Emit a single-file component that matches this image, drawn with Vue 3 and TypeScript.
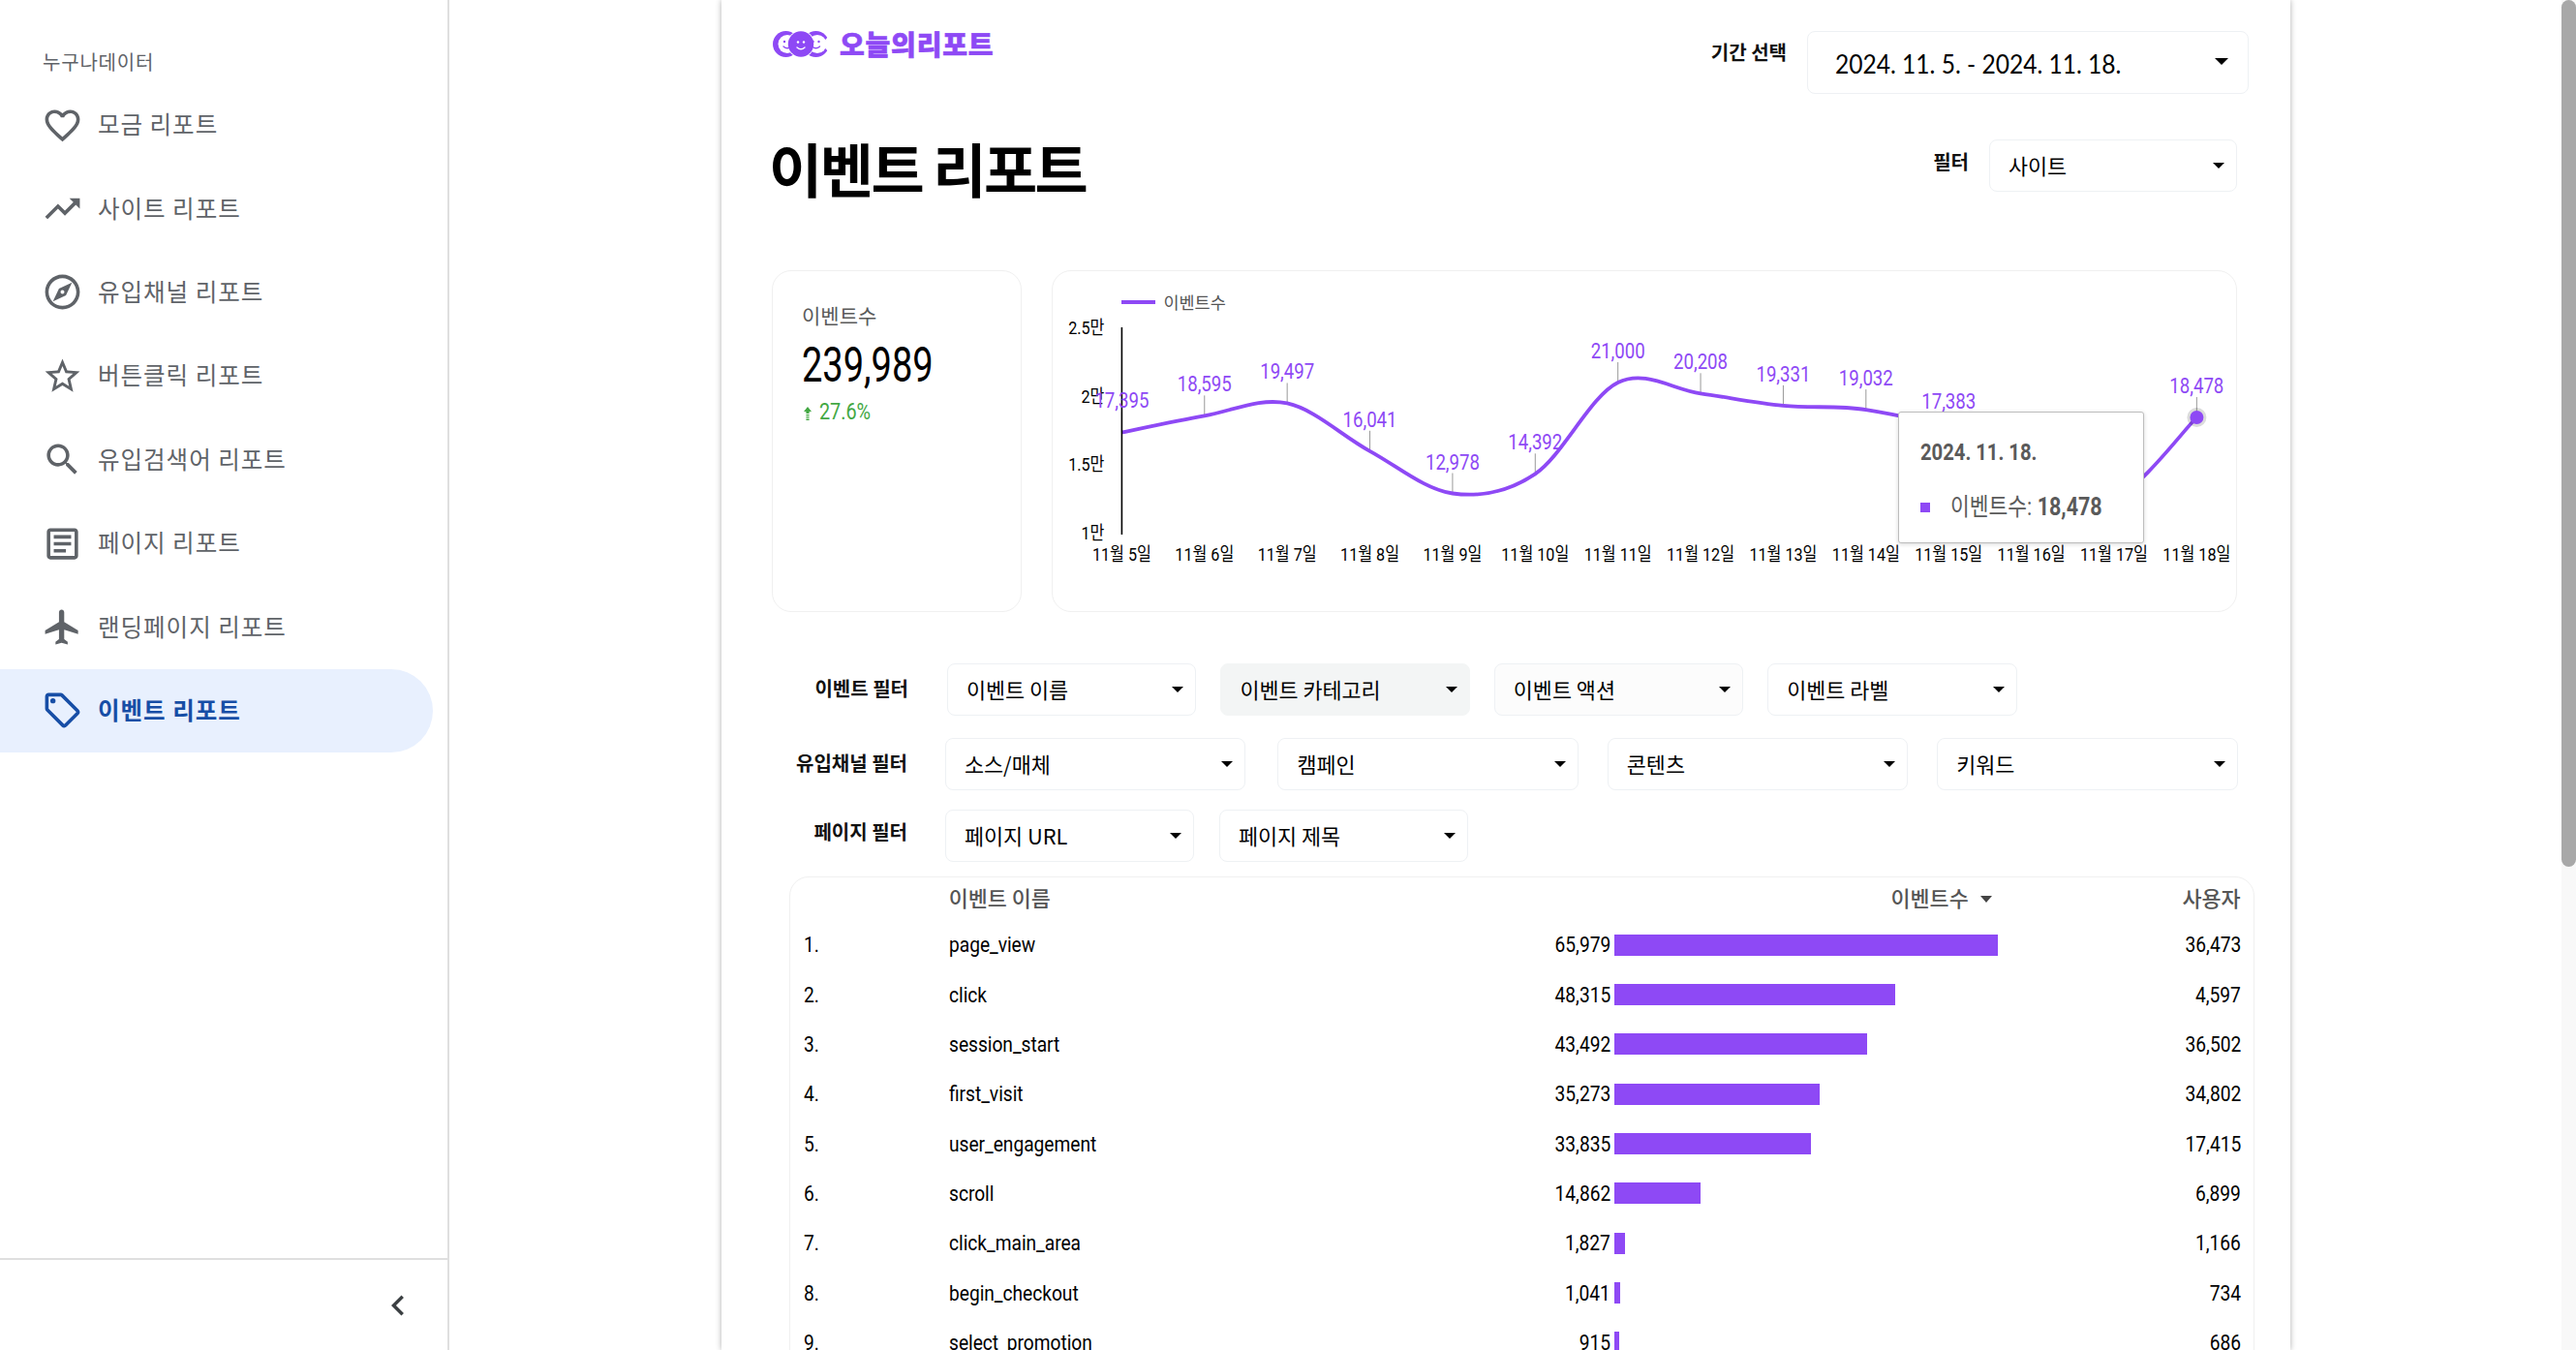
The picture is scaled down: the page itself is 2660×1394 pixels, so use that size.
<script setup lang="ts">
const menu = [
  { label: '모금 리포트', paths: ['M16.5 3c-1.74 0-3.41.81-4.5 2.09C10.91 3.81 9.24 3 7.5 3 4.42 3 2 5.42 2 8.5c0 3.78 3.4 6.86 8.55 11.54L12 21.35l1.45-1.32C18.6 15.36 22 12.28 22 8.5 22 5.42 19.58 3 16.5 3zm-4.4 15.55l-.1.1-.1-.1C7.14 14.24 4 11.39 4 8.5 4 6.5 5.5 5 7.5 5c1.54 0 3.04.99 3.57 2.36h1.87C13.46 5.99 14.96 5 16.5 5c2 0 3.5 1.5 3.5 3.5 0 2.89-3.14 5.74-7.9 10.05z'] },
  { label: '사이트 리포트', paths: ['M16 6l2.29 2.29-4.88 4.88-4-4L2 16.59 3.41 18l6-6 4 4 6.3-6.29L22 12V6z'] },
  { label: '유입채널 리포트', paths: ['M12 2C6.48 2 2 6.48 2 12s4.48 10 10 10 10-4.48 10-10S17.52 2 12 2zm0 18c-4.41 0-8-3.59-8-8s3.59-8 8-8 8 3.59 8 8-3.59 8-8 8zm-5.5-2.5l7.51-3.49L17.5 6.5 9.99 9.99 6.5 17.5zm5.5-6.6c.61 0 1.1.49 1.1 1.1s-.49 1.1-1.1 1.1-1.1-.49-1.1-1.1.49-1.1 1.1-1.1z'] },
  { label: '버튼클릭 리포트', paths: ['M22 9.24l-7.19-.62L12 2 9.19 8.63 2 9.24l5.46 4.73L5.82 21 12 17.27 18.18 21l-1.63-7.03L22 9.24zM12 15.4l-3.76 2.27 1-4.28-3.32-2.88 4.38-.38L12 6.1l1.71 4.04 4.38.38-3.32 2.88 1 4.28L12 15.4z'] },
  { label: '유입검색어 리포트', paths: ['M15.5 14h-.79l-.28-.27C15.41 12.59 16 11.11 16 9.5 16 5.91 13.09 3 9.5 3S3 5.91 3 9.5 5.91 16 9.5 16c1.61 0 3.09-.59 4.23-1.57l.27.28v.79l5 4.99L20.49 19l-4.99-5zm-6 0C7.01 14 5 11.99 5 9.5S7.01 5 9.5 5 14 7.01 14 9.5 11.99 14 9.5 14z'] },
  { label: '페이지 리포트', paths: ['M19 5v14H5V5h14m0-2H5c-1.1 0-2 .9-2 2v14c0 1.1.9 2 2 2h14c1.1 0 2-.9 2-2V5c0-1.1-.9-2-2-2z', 'M14 17H7v-2h7v2zm3-4H7v-2h10v2zm0-4H7V7h10v2z'] },
  { label: '랜딩페이지 리포트', paths: ['M21 16v-2l-8-5V3.5c0-.83-.67-1.5-1.5-1.5S10 2.67 10 3.5V9l-8 5v2l8-2.5V19l-2 1.5V22l3.5-1 3.5 1v-1.5L13 19v-5.5l8 2.5z'] },
  { label: '이벤트 리포트', active: true, paths: ['M21.41 11.58l-9-9C12.05 2.22 11.55 2 11 2H4c-1.1 0-2 .9-2 2v7c0 .55.22 1.05.59 1.42l9 9c.36.36.86.58 1.41.58s1.05-.22 1.41-.59l7-7c.37-.36.59-.86.59-1.41s-.23-1.06-.59-1.42zM13 20.01L4 11V4h7v-.01l9 9-7 7.02z', 'M6.5 5A1.5 1.5 0 1 0 6.5 8 1.5 1.5 0 1 0 6.5 5z'] },
]

const filters = [
  { label: '이벤트 필터', cls: 'row-a', items: ['이벤트 이름', '이벤트 카테고리', '이벤트 액션', '이벤트 라벨'] },
  { label: '유입채널 필터', cls: 'row-b', items: ['소스/매체', '캠페인', '콘텐츠', '키워드'] },
  { label: '페이지 필터', cls: 'row-c', items: ['페이지 URL', '페이지 제목'] },
]

const rows = [
  ['page_view', 65979, 36473], ['click', 48315, 4597], ['session_start', 43492, 36502],
  ['first_visit', 35273, 34802], ['user_engagement', 33835, 17415], ['scroll', 14862, 6899],
  ['click_main_area', 1827, 1166], ['begin_checkout', 1041, 734], ['select_promotion', 915, 686],
] as [string, number, number][]
const fmt = (n: number) => n.toLocaleString('en-US')

const vals = [17395, 18595, 19497, 16041, 12978, 14392, 21000, 20208, 19331, 19032, 17383, 13100, 12559, 18478]
const showLabel = (i: number) => i !== 11 && i !== 12
const px = (i: number) => 1159 + i * 85.38
const py = (v: number) => 552 - (v - 10000) * 0.01427
const pts = vals.map((v, i) => ({ x: px(i), y: py(v), v, i, day: `11월 ${i + 5}일` }))
function curve(): string {
  let d = `M${pts[0].x} ${pts[0].y}`
  for (let i = 0; i < pts.length - 1; i++) {
    const p0 = pts[Math.max(0, i - 1)]
    const p1 = pts[i]
    const p2 = pts[i + 1]
    const p3 = pts[Math.min(pts.length - 1, i + 2)]
    const c1x = p1.x + (p2.x - p0.x) / 6
    const c1y = p1.y + (p2.y - p0.y) / 6
    const c2x = p2.x - (p3.x - p1.x) / 6
    const c2y = p2.y - (p3.y - p1.y) / 6
    d += ` C${c1x} ${c1y} ${c2x} ${c2y} ${p2.x} ${p2.y}`
  }
  return d
}
const linePath = curve()
const squeeze = (x: number, y: number, k = 0.85) => `translate(${x} ${y}) scale(${k} 1)`
const yTicks = [
  { t: '2.5만', y: 345 },
  { t: '2만', y: 416 },
  { t: '1.5만', y: 486 },
  { t: '1만', y: 557 },
]
</script>

<template>
  <div class="root">
    <aside class="side">
      <div class="side-top">
        <div class="brand">누구나데이터</div>
        <nav class="nav">
          <div v-for="m in menu" :key="m.label" class="nav-item" :class="{ active: m.active }">
            <svg class="nav-icon" viewBox="0 0 24 24"><path v-for="p in m.paths" :key="p" :d="p" /></svg>
            <span>{{ m.label }}</span>
          </div>
        </nav>
      </div>
      <div class="side-foot">
        <svg class="chev" viewBox="0 0 24 24"><path d="M15.41 7.41L14 6l-6 6 6 6 1.41-1.41L10.83 12z" /></svg>
      </div>
    </aside>

    <main class="report">
      <div class="head-a">
        <div class="logo">
          <svg class="logo-mark" viewBox="0 0 58 27">
            <circle cx="13.5" cy="13.5" r="13.5" fill="#8e49f5" />
            <circle cx="15" cy="13.5" r="9.5" fill="#fff" />
            <circle cx="44.5" cy="13.5" r="13.5" fill="#8e49f5" />
            <circle cx="46" cy="13.5" r="9.5" fill="#fff" />
            <path d="M50 13.5 L58 5 V22 Z" fill="#fff" />
            <circle cx="29" cy="13.5" r="14" fill="#fff" />
            <circle cx="29" cy="13.5" r="13.2" fill="#8e49f5" />
            <g fill="#8e49f5">
              <circle cx="12" cy="11" r="1.2" /><circle cx="18" cy="11" r="1.2" />
              <circle cx="41.5" cy="11" r="1.2" /><circle cx="47.5" cy="11" r="1.2" />
            </g>
            <g fill="#fff">
              <circle cx="26" cy="11.5" r="1.2" /><circle cx="32" cy="11.5" r="1.2" />
            </g>
            <g fill="none" stroke-width="1.4" stroke-linecap="round">
              <path d="M11 16 Q15 19.5 19 16" stroke="#8e49f5" />
              <path d="M25 17 Q29 20.5 33 17" stroke="#fff" />
              <path d="M40.5 16 Q44.5 19.5 48.5 16" stroke="#8e49f5" />
            </g>
          </svg>
          <span class="logo-text">오늘의리포트</span>
        </div>
        <div class="date-wrap">
          <span class="ctl-label date-label">기간 선택</span>
          <div class="date-box">
            <span class="date-text">2024. 11. 5. - 2024. 11. 18.</span>
            <i class="caret big"></i>
          </div>
        </div>
      </div>

      <div class="head-b">
        <h1 class="title">이벤트 리포트</h1>
        <div class="site-wrap">
          <span class="ctl-label site-label">필터</span>
          <div class="select site-box"><span>사이트</span><i class="caret"></i></div>
        </div>
      </div>

      <section class="cards">
        <div class="card kpi">
          <div class="kpi-name">이벤트수</div>
          <div class="kpi-val"><span class="sq big-num">239,989</span></div>
          <div class="kpi-delta">
            <svg class="up" viewBox="0 0 8 14"><path d="M4 0 L8 5 H5.6 V7 H2.4 V5 H0 Z M2.4 8 H5.6 V9.2 H2.4 Z M2.4 10.2 H5.6 V11.4 H2.4 Z M2.4 12.4 H5.6 V14 H2.4 Z" /></svg>
            <span class="sq">27.6%</span>
          </div>
        </div>
        <div class="card chart">
          <svg class="chart-svg" viewBox="1087.6 279 1222.4 353">
            <rect x="1158.6" y="310" width="35" height="4" fill="#8e49f5" />
            <text class="legend" x="1202" y="319">이벤트수</text>
            <text v-for="t in yTicks" :key="t.t" class="tick" text-anchor="end" :transform="squeeze(1141, t.y)">{{ t.t }}</text>
            <g v-for="p in pts" :key="'s' + p.i">
              <line v-if="showLabel(p.i)" :x1="p.x" :x2="p.x" :y1="p.y - 21" :y2="p.y" stroke="#999" stroke-width="1" />
            </g>
            <path :d="linePath" fill="none" stroke="#8e49f5" stroke-width="3.8" />
            <line x1="1159" x2="1159" y1="338" y2="552" stroke="#000" stroke-width="1.6" />
            <g v-for="p in pts" :key="'l' + p.i">
              <text v-if="showLabel(p.i)" class="val" text-anchor="middle" :transform="squeeze(p.x, p.y - 25, 0.81)">{{ fmt(p.v) }}</text>
              <text class="tick" text-anchor="middle" :transform="squeeze(p.x, 579)">{{ p.day }}</text>
            </g>
            <circle cx="2269" cy="431" r="10" fill="#000" opacity=".14" />
            <circle cx="2269" cy="431" r="7" fill="#8e49f5" />
          </svg>
          <div class="tooltip">
            <div class="tip-title"><span class="sq">2024. 11. 18.</span></div>
            <div class="tip-row">
              <i class="tip-dot"></i>
              <span class="sq">이벤트수: <b>18,478</b></span>
            </div>
          </div>
        </div>
      </section>

      <section class="filters">
        <div v-for="f in filters" :key="f.label" class="frow" :class="f.cls">
          <span class="ctl-label flabel">{{ f.label }}</span>
          <div class="fitems">
            <div v-for="it in f.items" :key="it" class="select" :class="{ hot: it === '이벤트 카테고리', warm: it === '이벤트 액션' }">
              <span>{{ it }}</span><i class="caret"></i>
            </div>
          </div>
        </div>
      </section>

      <section class="table">
        <div class="trow thead">
          <span class="c-idx"></span>
          <span class="c-name"><span>이벤트 이름</span></span>
          <span class="c-bar th-sort"><span>이벤트수</span><i class="sort"></i></span>
          <span class="c-user"><span>사용자</span></span>
        </div>
        <div v-for="(r, i) in rows" :key="r[0]" class="trow">
          <span class="c-idx"><span class="sq">{{ i + 1 }}.</span></span>
          <span class="c-name">
            <span class="sq">{{ r[0] }}</span>
            <span class="num sq-r">{{ fmt(r[1]) }}</span>
          </span>
          <span class="c-bar"><i class="bar" :style="{ width: (397 * r[1] / 65979) + 'px' }"></i></span>
          <span class="c-user"><span class="sq-r">{{ fmt(r[2]) }}</span></span>
        </div>
      </section>
    </main>

    <div class="scroll"><div class="thumb"></div></div>
  </div>
</template>

<style>
html, body { margin: 0; overflow: hidden; background: #fff; }
</style>

<style scoped>
.root {
  position: relative;
  display: flex;
  width: 2660px;
  height: 1394px;
  overflow: hidden;
  background: #fff;
  font-family: "Noto Sans CJK KR", "Noto Sans", sans-serif;
}
.side {
  box-sizing: border-box;
  width: 464px;
  height: 1394px;
  flex: none;
  border-right: 2px solid #dfdfdf;
  display: flex;
  flex-direction: column;
  justify-content: space-between;
}
.brand {
  margin: 49px 0 0 44px;
  height: 30px;
  line-height: 30px;
  font-size: 20px;
  letter-spacing: .8px;
  color: #5f6368;
}
.nav { margin-top: 7px; padding-right: 15px; }
.nav-item {
  display: flex;
  align-items: center;
  height: 86.4px;
  padding-left: 43px;
  color: #5f6368;
  font-size: 24.5px;
  letter-spacing: 1px;
  border-radius: 0 43px 43px 0;
}
.nav-item span { margin-left: 15px; padding-bottom: 3px; }
.nav-icon { width: 43px; height: 43px; flex: none; fill: #5f6368; }
.nav-item.active { background: #e8f0fe; color: #174ea6; font-weight: 700; }
.nav-item.active .nav-icon { fill: #174ea6; }
.side-foot {
  height: 95px;
  border-top: 2px solid #dfdfdf;
  box-sizing: border-box;
  display: flex;
  align-items: center;
  justify-content: flex-end;
  padding-right: 30px;
}
.chev { width: 42px; height: 42px; fill: #3c4043; }

.report {
  box-sizing: border-box;
  flex: none;
  width: 1620px;
  height: 1394px;
  margin-left: 281px;
  padding: 32px 55px 0 53px;
  background: #fff;
  box-shadow: 0 0 6px rgba(0, 0, 0, .32);
  font-family: "Roboto", "Noto Sans CJK KR", sans-serif;
  color: #000;
  overflow: hidden;
}
.sq, .sq-r { display: inline-block; transform: scaleX(.86); transform-origin: left center; white-space: pre; }
.sq-r { transform-origin: right center; }
.head-a { display: flex; justify-content: space-between; height: 65px; margin-right: -12px; }
.logo { display: flex; align-items: flex-start; }
.logo-mark { width: 58px; height: 27px; }
.logo-text {
  margin-left: 11px;
  font-family: "Noto Sans CJK KR", sans-serif;
  font-size: 28px;
  line-height: 27px;
  font-weight: 900;
  letter-spacing: .8px;
  -webkit-text-stroke: .6px #8e49f5;
  color: #8e49f5;
}
.date-wrap { display: flex; align-items: flex-start; }
.ctl-label { font-family: "Noto Sans CJK KR", sans-serif; font-weight: 700; font-size: 20px; line-height: 24px; color: #111; white-space: nowrap; }
.date-label { margin-top: 10px; margin-right: 21px; }
.date-box {
  box-sizing: border-box;
  display: flex;
  align-items: center;
  justify-content: space-between;
  width: 456px;
  height: 65px;
  padding: 2px 20px 0 28px;
  border: 1px solid #eef1f4;
  border-radius: 8px;
}
.date-text { font-family: "Lato", sans-serif; font-size: 27px; line-height: 40px; display: inline-block; transform: scaleX(.91); transform-origin: left center; white-space: pre; }
.caret { width: 0; height: 0; flex: none; border-left: 6.5px solid transparent; border-right: 6.5px solid transparent; border-top: 6.5px solid #000; }
.caret.big { border-left-width: 7px; border-right-width: 7px; border-top-width: 7px; margin-top: -4px; }

.head-b { display: flex; justify-content: space-between; margin-top: 47px; height: 54px; }
.title {
  margin: -1px 0 0 -4px;
  font-family: "Noto Sans CJK KR", sans-serif;
  font-size: 60px;
  line-height: 60px;
  font-weight: 700;
  letter-spacing: -2.5px;
  white-space: nowrap;
}
.site-wrap { display: flex; align-items: flex-start; }
.site-label { margin-top: 11px; margin-right: 21px; }
.select {
  box-sizing: border-box;
  display: flex;
  align-items: center;
  justify-content: space-between;
  height: 54px;
  padding: 0 12px 0 19px;
  border: 1px solid #eef1f4;
  border-radius: 8px;
  font-family: "Noto Sans CJK KR", sans-serif;
  font-size: 21.8px;
  color: #000;
  white-space: nowrap;
}
.select span { padding-bottom: 2px; }
.site-box { width: 256px; }
.select.hot { background: #f3f5f5; border-color: #f3f5f5; }
.select.warm { background: #fcfcfc; }

.cards { display: flex; gap: 31px; height: 353px; margin-top: 81px; margin-left: -1px; }
.card { box-sizing: border-box; background: #fff; border: 1px solid #f0f0f0; border-radius: 20px; }
.kpi { width: 258px; padding: 30px 0 0 30px; }
.kpi-name { font-family: "Noto Sans CJK KR", sans-serif; font-size: 21px; line-height: 30px; color: #5a5a5a; }
.kpi-val { margin-top: 10px; font-size: 50px; line-height: 54px; color: #000; }
.big-num { transform: scaleX(.76); }
.kpi-delta { display: flex; align-items: center; margin-top: 8px; height: 26px; color: #43a843; font-size: 23px; fill: #43a843; }
.up { width: 8px; height: 14px; margin: 4px 8px 0 2px; flex: none; }
.chart { flex: 1; position: relative; }
.chart-svg { position: absolute; left: 0; top: -1px; width: 1222.4px; height: 353px; overflow: visible; font-family: "Roboto", "Noto Sans CJK KR", sans-serif; }
.legend { font-family: "Noto Sans CJK KR", sans-serif; font-size: 17.5px; fill: #555; }
.tick { font-size: 19px; fill: #000; }
.val { font-size: 23px; fill: #8e49f5; }
.tooltip {
  position: absolute;
  box-sizing: border-box;
  left: 873px;
  top: 145px;
  width: 254px;
  height: 136px;
  padding: 27px 0 0 22px;
  background: #fff;
  border: 1px solid #bdbdbd;
  border-radius: 3px;
  box-shadow: 0 1px 4px rgba(0, 0, 0, .16);
  color: #5a5a5a;
  font-size: 25px;
}
.tip-title { font-weight: 700; font-size: 23.5px; line-height: 28px; }
.tip-row { display: flex; align-items: center; margin-top: 29px; line-height: 28px; }
.tip-dot { width: 10px; height: 10px; margin-right: 21px; background: #8e49f5; flex: none; }
.tip-row b { font-weight: 700; }

.filters { margin-top: 53px; }
.frow { display: flex; }
.frow + .frow { margin-top: 23px; }
.frow.row-c { margin-top: 20px; }
.flabel { box-sizing: border-box; flex: none; text-align: right; padding-top: 14px; }
.row-a .flabel { width: 140px; margin-right: 40px; }
.row-b .flabel, .row-c .flabel { width: 139px; margin-right: 39px; }
.row-c .flabel { padding-top: 11px; }
.fitems { display: flex; }
.row-a .fitems { gap: 25px; }
.row-a .select { width: 257.4px; }
.row-b .fitems { gap: 30px; }
.row-b .select { width: 310.4px; }
.row-b .select:nth-child(2) { margin-left: 3px; }
.row-c .fitems { gap: 26px; }
.row-c .select { width: 257px; }

.table {
  box-sizing: border-box;
  margin: 15px -17.7px 0 16.7px;
  height: 560px;
  padding: 0 13px 0 14.5px;
  border: 1px solid #f0f0f0;
  border-radius: 20px;
  font-size: 22px;
}
.trow { display: flex; align-items: center; height: 51.35px; }
.trow .sq, .trow .sq-r { transform: scaleX(.87); }
.thead { height: 44px; color: #555; font-family: "Noto Sans CJK KR", sans-serif; font-size: 21.8px; font-weight: 500; padding-bottom: 3px; box-sizing: border-box; }
.c-idx { width: 149.5px; flex: none; }
.c-name { width: 683.5px; flex: none; display: flex; justify-content: space-between; }
.c-bar { width: 396px; margin-left: 3.5px; flex: none; display: flex; align-items: center; }
.th-sort { justify-content: flex-end; gap: 12px; padding-right: 6px; box-sizing: border-box; }
.sort { width: 0; height: 0; margin-top: 3px; border-left: 6px solid transparent; border-right: 6px solid transparent; border-top: 7px solid #444; }
.c-user { flex: 1; text-align: right; }
.bar { display: block; height: 22px; background: #8e49f5; }

.scroll { position: absolute; right: 0; top: 0; width: 15px; height: 1394px; background: #f8f8f8; }
.thumb { height: 895px; background: #a8a8a8; border-radius: 8px; }
</style>
